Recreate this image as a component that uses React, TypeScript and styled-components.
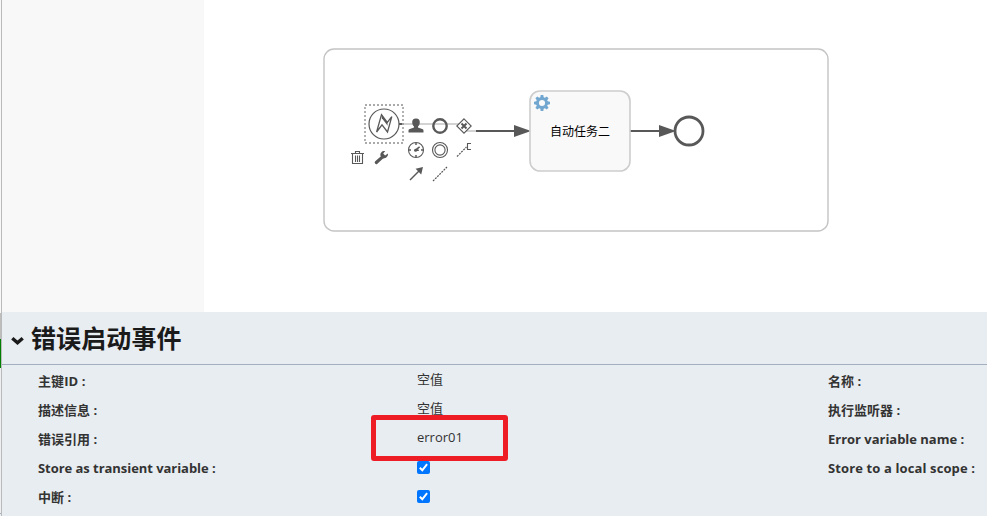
import React from "react";
import styled, { createGlobalStyle } from "styled-components";

const GlobalStyle = createGlobalStyle`
  * { box-sizing: border-box; }
  body { margin: 0; background: #fff; overflow: hidden; }
`;

const latin = `"Open Sans", "Noto Sans CJK SC", sans-serif`;

const Page = styled.div`
  display: flex;
  width: 987px;
  height: 516px;
  overflow: hidden;
  font-family: ${latin};
  color: #333;
`;

const Gutter = styled.div`
  display: flex;
  flex-direction: column;
  flex: 0 0 2px;
  border-right: 1px solid #bababa;
`;

const Segment = styled.div<{ $height: number; $color: string }>`
  height: ${(p) => p.$height}px;
  background: ${(p) => p.$color};
`;

const Main = styled.main`
  flex: 1;
  min-width: 0;
`;

const Editor = styled.section`
  display: flex;
  height: 312px;
`;

const Palette = styled.aside`
  flex: 0 0 202px;
  background: #f8f8f8;
`;

const Canvas = styled.svg`
  display: block;
  flex: 0 0 783px;
  height: 312px;
`;

const TaskLabel = styled.text`
  font: 12px "Noto Sans CJK SC", sans-serif;
  fill: #000;
  text-anchor: middle;
`;

const Panel = styled.section`
  height: 204px;
  background: #e8edf1;
`;

const PanelHeader = styled.header`
  display: flex;
  align-items: center;
  height: 53px;
  padding: 0 0 2px 9px;
  border-bottom: 1px solid #a4afbf;
`;

const Chevron = styled.svg`
  width: 14px;
  height: 10px;
  margin: 7px 6px 0 0;
`;

const Title = styled.h1`
  margin: 0;
  font: 700 25px/36px "Noto Sans CJK SC", sans-serif;
  letter-spacing: 0.1px;
  color: #1a1a1a;
`;

const Properties = styled.div`
  display: grid;
  grid-template-columns: 379px 411px 1fr;
  grid-auto-rows: 29px;
  padding: 1px 0 0 36px;
`;

const Label = styled.div<{ $spacing?: number }>`
  padding-top: 5px;
  font-size: 13px;
  font-weight: 700;
  line-height: 20px;
  letter-spacing: ${(p) => p.$spacing ?? 0}px;
  white-space: nowrap;
`;

const Value = styled.div`
  position: relative;
  padding-top: 3px;
  font-size: 13px;
  line-height: 20px;
`;

const Highlight = styled.div`
  position: absolute;
  left: -46px;
  top: -9px;
  width: 137px;
  height: 46px;
  border: 5px solid #ee1c25;
  border-radius: 3px;
`;

const Check = styled.svg`
  display: block;
  width: 13px;
  height: 13px;
  margin-top: 5px;
`;

const Checkbox = () => (
  <Check viewBox="0 0 13 13">
    <rect width="13" height="13" rx="2" fill="#0075ff" />
    <path d="M2.8 6.8 5.3 9.3 10.1 3.2" fill="none" stroke="#fff" strokeWidth="2" />
  </Check>
);

const ink = "#585858";
const teeth = [0, 45, 90, 135, 180, 225, 270, 315];
const ticks = [0, 90, 180, 270];

const ContextPad = () => (
  <g stroke={ink} fill="none" strokeWidth="1.2">
    <path d="M416 118.5c2.8 0 3.8 1.7 3.8 3.7 0 1.7-.7 3.4-1.8 4.3v1l4.8 1.8c.6.3.7 1 .7 2.2v1h-15v-1c0-1.2.1-1.9.7-2.2l4.8-1.8v-1c-1.1-.9-1.8-2.6-1.8-4.3 0-2 1-3.7 3.8-3.7z" fill={ink} stroke="none" />
    <circle cx="440" cy="126" r="6.7" strokeWidth="2.4" />
    <path d="M464 118.8 471.2 126 464 133.2 456.8 126z" fill="#fff" strokeWidth="1.1" />
    <path d="M461.5 123.5l5 5m0-5l-5 5" strokeWidth="2" />
    <circle cx="416" cy="150" r="7.5" strokeWidth="1.1" />
    {ticks.map((a) => (
      <path key={a} d="M416 143v2" transform={`rotate(${a} 416 150)`} strokeWidth="1.5" />
    ))}
    <path d="M415 150.3l4.6-3.4M414.8 150.2h4" strokeWidth="1.5" />
    <circle cx="415.6" cy="150.2" r="1.5" fill={ink} stroke="none" />
    <circle cx="440" cy="150" r="7.5" strokeWidth="1.1" />
    <circle cx="440" cy="150" r="5.1" strokeWidth="1.1" />
    <path d="M457 156.5l9.5-9.5" strokeDasharray="2 1" />
    <path d="M471 143.5h-3.5v6h3.5" strokeWidth="1.1" />
    <path d="M410 180l9-9" strokeWidth="1.4" />
    <path d="M423 167l-1.8 7.4-5.6-5.6z" fill={ink} stroke="none" />
    <path d="M433 181l14-14" strokeDasharray="2 1" />
    <path d="M351 153.5h13M355.5 153.2v-1.7h4v1.7M352.5 154v9.5h10V154M355.5 155.5v6.5M357.5 155.5v6.5M359.5 155.5v6.5" strokeWidth="1.1" />
    <path d="M376.3 162.5l6-5.4" strokeWidth="3.2" strokeLinecap="round" />
    <path d="M385.3 151.1l-2.1 2.4 1.9 1.9 2.8-1.8c.5 2.5-1.3 4.8-4.8 4.8l-2.7-2.7c-.3-2.9 1.8-5.2 4.9-4.6z" fill={ink} stroke="none" />
  </g>
);

const Diagram = () => (
  <Canvas viewBox="204 0 783 312">
    <rect x="324" y="49" width="504" height="182" rx="10" fill="#fff" stroke="#c4c4c4" strokeWidth="1.4" />
    <path d="M403 124h57M465 131h11" stroke="#c5c5c5" strokeWidth="1.5" />
    <path d="M399 124h5M476 131h40M630 131h31" stroke={ink} strokeWidth="2" />
    <path d="M514 125l17 6-17 6zM659 125l17 6-17 6z" fill={ink} />
    <circle cx="384" cy="124" r="15" fill="#fff" stroke={ink} strokeWidth="1.2" />
    <path d="M376.6 132l4.9-17.4 5.8 7.9 4.5-5.9-4.3 15.4-5.5-7.2z" fill="#fff" stroke={ink} strokeWidth="1.3" />
    <path d="M381.5 114.6l5.8 7.9.4 3.2-5.8-7.4z" fill={ink} />
    <rect x="365" y="105" width="38" height="38" fill="none" stroke="#aaa" strokeWidth="1.8" strokeDasharray="2 2" />
    <rect x="530" y="91" width="100" height="80" rx="10" fill="#f9f9f9" stroke="#cdcdcd" strokeWidth="1.6" />
    <g fill="#72a7d0">
      {teeth.map((a) => (
        <path key={a} d="M540.1 98.5l.6-3.5h2.6l.6 3.5z" transform={`rotate(${a} 542 103)`} />
      ))}
      <circle cx="542" cy="103" r="4.5" fill="none" stroke="#72a7d0" strokeWidth="2.9" />
    </g>
    <TaskLabel x="580" y="136">自动任务二</TaskLabel>
    <circle cx="689" cy="131" r="14" fill="#fff" stroke={ink} strokeWidth="2.8" />
    <ContextPad />
  </Canvas>
);

export default function App() {
  return (
    <Page>
      <GlobalStyle />
      <Gutter>
        <Segment $height={313} $color="#f8f8f8" />
        <Segment $height={26} $color="#bdbdbd" />
        <Segment $height={29} $color="#008000" />
        <Segment $height={145} $color="#edf0f3" />
        <Segment $height={1} $color="#a4afbf" />
        <Segment $height={2} $color="#edf0f3" />
      </Gutter>
      <Main>
        <Editor>
          <Palette />
          <Diagram />
        </Editor>
        <Panel>
          <PanelHeader>
            <Chevron viewBox="0 0 14 10">
              <path d="M1.3 2.2l5.2 4.6 5.2-4.6" fill="none" stroke="#1a1a1a" strokeWidth="3.4" />
            </Chevron>
            <Title>错误启动事件</Title>
          </PanelHeader>
          <Properties>
            <Label $spacing={0.1}>主键ID :</Label>
            <Value>空值</Value>
            <Label>名称 :</Label>
            <Label>描述信息 :</Label>
            <Value>空值</Value>
            <Label>执行监听器 :</Label>
            <Label>错误引用 :</Label>
            <Value>
              error01
              <Highlight />
            </Value>
            <Label $spacing={-0.02}>Error variable name :</Label>
            <Label $spacing={-0.05}>Store as transient variable :</Label>
            <Value><Checkbox /></Value>
            <Label $spacing={0.12}>Store to a local scope :</Label>
            <Label>中断 :</Label>
            <Value><Checkbox /></Value>
          </Properties>
        </Panel>
      </Main>
    </Page>
  );
}
